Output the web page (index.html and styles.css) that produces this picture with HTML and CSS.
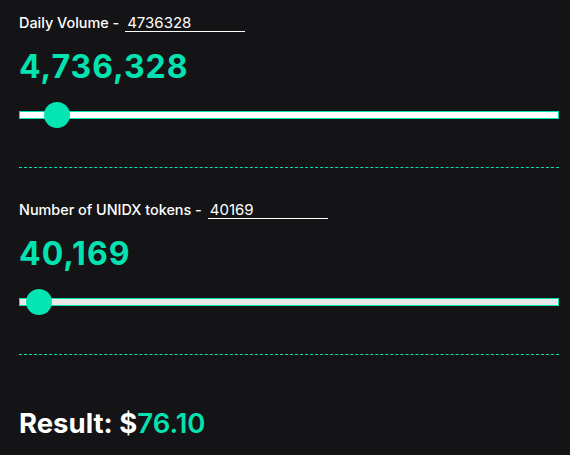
FILE: index.html
```html
<!DOCTYPE html>
<html lang="en">
<head>
<meta charset="utf-8">
<title>UNIDX calculator</title>
<link rel="stylesheet" href="styles.css">
</head>
<body>
<main class="calc">
  <section class="block">
    <div class="field-row">
      <label class="field-label" for="vol">Daily Volume -</label>
      <input class="field-input" id="vol" type="text" value="4736328">
    </div>
    <div class="big-value">4,736,328</div>
    <input class="slider slider-white" type="range" min="0" max="100000000" value="4736328">
  </section>
  <hr class="divider divider-first">
  <section class="block">
    <div class="field-row">
      <label class="field-label" for="tok">Number of UNIDX tokens -</label>
      <input class="field-input" id="tok" type="text" value="40169">
    </div>
    <div class="big-value">40,169</div>
    <input class="slider slider-grey" type="range" min="0" max="3400000" value="40169">
  </section>
  <hr class="divider divider-second">
  <div class="result">Result: $<span class="result-num">76.10</span></div>
</main>
</body>
</html>
```
FILE: styles.css
```css
html, body {
  margin: 0;
  padding: 0;
  background: #141416;
}
body {
  font-family: Inter, "Noto Sans", sans-serif;
  color: #ffffff;
}
.calc {
  width: 540px;
  padding: 13px 0 0 19px;
}
.block {
  display: flex;
  flex-direction: column;
}
.field-row {
  display: flex;
  align-items: baseline;
  gap: 6px;
  height: 20px;
}
.field-label {
  font-size: 14.4px;
  font-weight: 500;
  line-height: 20px;
}
.field-input {
  width: 116px;
  padding: 0 2px;
  margin: 0;
  border: none;
  border-bottom: 1px solid #ffffff;
  background: transparent;
  color: #ffffff;
  font-family: Inter, "Noto Sans", sans-serif;
  font-size: 15px;
  line-height: 17px;
  height: 17px;
  outline: none;
}
.big-value {
  margin-top: 14px;
  font-size: 32px;
  font-weight: 700;
  line-height: 40px;
  color: #03e2b1;
  letter-spacing: 1px;
}
.slider {
  -webkit-appearance: none;
  appearance: none;
  width: 540px;
  height: 26px;
  margin: 15px 0 0 0;
  padding: 0;
  background: transparent;
}
.slider::-webkit-slider-runnable-track {
  height: 8px;
  box-sizing: border-box;
  border: 1px solid #03e2b1;
  background: #ffffff;
}
.slider-grey::-webkit-slider-runnable-track {
  background: #e8e8e8;
}
.slider::-webkit-slider-thumb {
  -webkit-appearance: none;
  appearance: none;
  width: 26px;
  height: 26px;
  border-radius: 50%;
  background: #03e6b3;
  border: none;
  margin-top: -10px;
}
.divider {
  width: 540px;
  border: none;
  border-top: 1px dashed #03e2b1;
  height: 0;
}
.divider-first {
  margin: 39px 0 32px 0;
}
.divider-second {
  margin: 39px 0 0 0;
}
.result {
  font-size: 27.5px;
  font-weight: 700;
  line-height: 36px;
  margin-top: 50px;
}
.result-num {
  color: #03e2b1;
  font-weight: 600;
}
```
